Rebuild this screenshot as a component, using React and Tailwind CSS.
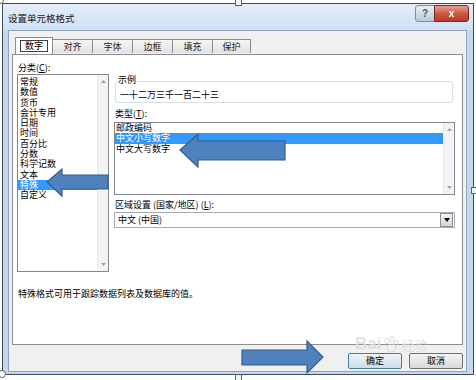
import React from 'react';

const FONT = "font-['Noto_Sans_CJK_SC','Noto_Sans',sans-serif]";

function Scrollbar() {
  return (
    <div className="w-[11px] shrink-0 bg-[#f3f3f3] border-l border-[#e8e8e8] flex flex-col justify-between items-center py-[5px]">
      <svg width="5" height="3" viewBox="0 0 5 3"><path d="M0 3 L2.5 0 L5 3 Z" fill="#a0a0a0" /></svg>
      <svg width="5" height="3" viewBox="0 0 5 3"><path d="M0 0 L2.5 3 L5 0 Z" fill="#a0a0a0" /></svg>
    </div>
  );
}

function Tab({ label, active, w }) {
  if (active) {
    return (
      <div className={`${w} h-[17px] -mb-px relative z-10 bg-white border border-b-0 border-[#898c95] flex items-center justify-center`}>
        <div className="border border-[#404040] px-[4px] leading-[10px] text-[9px]">{label}</div>
      </div>
    );
  }
  return (
    <div className={`${w} h-[14px] mt-[2px] -ml-px bg-linear-to-b from-[#f6f6f6] to-[#e2e2e2] border border-b-0 border-[#898c95] flex items-center justify-center text-[9px] leading-[10px] text-[#222]`}>
      {label}
    </div>
  );
}

export default function App() {
  const cats = ['常规', '数值', '货币', '会计专用', '日期', '时间', '百分比', '分数', '科学记数', '文本', '特殊', '自定义'];
  const types = ['邮政编码', '中文小写数字', '中文大写数字'];
  return (
    <div className={`relative w-[476px] h-[380px] bg-white overflow-hidden text-black ${FONT}`}>
      {/* dialog */}
      <div className="ml-[2px] mt-[3px] w-[472px] h-[372px] border border-[#3e4b5a] bg-[#c3d7ee] flex flex-col">
        {/* title bar */}
        <div className="h-[26px] shrink-0 bg-linear-to-b from-[#e4edf8] to-[#cfe0f3] flex items-start justify-between pl-[5px] pr-[4px]">
          <div className="text-[9.5px] leading-[12px] mt-[8px] text-[#1a1a1a]">设置单元格格式</div>
          <div className="flex mt-[1px]">
            <div className="w-[20px] h-[17px] rounded-l-[3px] border border-[#7a8ea5] bg-linear-to-b from-[#e8eff7] to-[#b9c9dc] flex items-center justify-center text-[10px] font-bold text-[#4a5a6e] leading-none font-['Liberation_Sans',sans-serif]">?</div>
            <div className="w-[35px] h-[17px] -ml-px rounded-r-[3px] border border-[#7b2a22] bg-linear-to-b from-[#e8a093] via-[#cf5a44] to-[#b73a26] flex items-center justify-center text-[10px] font-bold text-white leading-none font-['Liberation_Sans',sans-serif]">x</div>
          </div>
        </div>
        {/* content */}
        <div className="flex-1 ml-[5px] mr-[6px] mb-[2px] bg-[#f0f0f0] border border-[#8fa3bc] flex flex-col">
          {/* tabs */}
          <div className="flex items-start mt-[6px] ml-[6px] h-[17px]">
            <Tab label="数字" active w="w-[38px]" />
            <Tab label="对齐" w="w-[41px]" />
            <Tab label="字体" w="w-[41px]" />
            <Tab label="边框" w="w-[41px]" />
            <Tab label="填充" w="w-[41px]" />
            <Tab label="保护" w="w-[39px]" />
          </div>
          {/* panel */}
          <div className="mx-[3px] h-[291px] bg-white border border-[#898c95] flex flex-col text-[9px] leading-[12px]">
            <div className="flex mt-[7px] ml-[4px]">
              {/* left column */}
              <div className="w-[92px] flex flex-col">
                <div className="h-[12px] pl-[1px]">分类(<u>C</u>):</div>
                <div className="h-[198px] border border-[#828790] bg-white flex">
                  <div className="flex-1 pt-[2px]">
                    {cats.map((c) => (
                      <div
                        key={c}
                        className={`h-[10.3px] leading-[10.3px] pl-[2px] ${c === '特殊' ? 'bg-[#3399ff] text-white' : ''}`}
                      >
                        {c}
                      </div>
                    ))}
                  </div>
                  <Scrollbar />
                </div>
              </div>
              {/* right column */}
              <div className="w-[341px] ml-[5px] flex flex-col">
                <div className="mt-[12px] ml-[3px] px-[1px] w-fit h-[12px] -mb-[5px] bg-white relative z-10">示例</div>
                <div className="h-[22px] ml-[1px] mr-[2px] border border-[#d5dfe5] rounded-[3px] pl-[4px] pt-[7px]">一十二万三千一百二十三</div>
                <div className="mt-[5px] h-[12px] pl-[1px]">类型(<u>T</u>):</div>
                <div className="mt-[2px] h-[73px] border border-[#828790] bg-white flex overflow-hidden">
                  <div className="flex-1">
                    {types.map((t, i) => (
                      <div
                        key={t}
                        className={`h-[10.3px] leading-[10.3px] pl-[1px] ${i === 1 ? 'bg-[#3399ff] text-white' : ''}`}
                      >
                        {t}
                      </div>
                    ))}
                  </div>
                  <Scrollbar />
                </div>
                <div className="mt-[4px] h-[12px] pl-[1px]">区域设置 (国家/地区) (<u>L</u>):</div>
                <div className="mt-[1px] h-[16px] border border-[#a5acb5] bg-white flex items-center">
                  <div className="flex-1 pl-[3px]">中文 (中国)</div>
                  <div className="w-[13px] h-[14px] mr-[1px] border border-[#8d8d8d] bg-linear-to-b from-[#f3f3f3] to-[#d6d6d6] flex items-center justify-center">
                    <svg width="6" height="4" viewBox="0 0 6 4"><path d="M0 0 L6 0 L3 4 Z" fill="#000" /></svg>
                  </div>
                </div>
              </div>
            </div>
            <div className="mt-[16px] ml-[5px]">特殊格式可用于跟踪数据列表及数据库的值。</div>
          </div>
          {/* buttons */}
          <div className="flex justify-end gap-[7px] mt-[8px] mr-[3px] text-[9px]">
            <div className="w-[54px] h-[16px] rounded-[2px] border border-[#3c7fb1] bg-linear-to-b from-[#edf5fb] to-[#cfdce8] flex items-center justify-center">确定</div>
            <div className="w-[54px] h-[16px] rounded-[2px] border border-[#707070] bg-linear-to-b from-[#f4f4f4] to-[#d9d9d9] flex items-center justify-center">取消</div>
          </div>
        </div>
      </div>

      {/* watermark */}
      <div className="absolute left-[355px] top-[334px] flex items-end gap-[2px] text-[#dcdcdc] opacity-80 pointer-events-none">
        <span className="text-[17px] font-bold leading-[20px] font-['Liberation_Sans',sans-serif]">Bai</span>
        <svg width="16" height="18" viewBox="0 0 16 18">
          <g fill="none" stroke="#d0d0d0" strokeWidth="1">
            <ellipse cx="4" cy="5" rx="2" ry="2.5" />
            <ellipse cx="9" cy="3" rx="2" ry="2.5" />
            <ellipse cx="13" cy="7" rx="2" ry="2.5" />
            <ellipse cx="8.5" cy="12" rx="4.5" ry="4" />
          </g>
        </svg>
        <span className="text-[13px] leading-[18px]">经验</span>
      </div>

      {/* arrows */}
      <svg className="absolute left-0 top-0 pointer-events-none" width="476" height="380" viewBox="0 0 476 380">
        <g fill="#4f81bd" stroke="#385d8a" strokeWidth="1.2" strokeLinejoin="miter">
          <polygon points="47,182 62,169 62,175 108,175 108,189 62,189 62,196" />
          <polygon points="180,150 198,134 198,141 285,141 285,160 198,160 198,167" />
          <polygon points="242,350 307,350 307,341 323,357 307,373 307,365 242,365" />
        </g>
      </svg>

      {/* selection handles */}
      <div className="absolute left-[-4px] top-[-4px] w-[8px] h-[8px] rounded-full bg-white border border-[#606060]" />
      <div className="absolute left-[235px] top-[-1px] w-[7px] h-[7px] bg-[#eef4fa] border border-[#606060]" />
      <div className="absolute left-[471px] top-[187px] w-[7px] h-[7px] bg-[#eef4fa] border border-[#606060]" />
      <div className="absolute left-[-2px] top-[370px] w-[8px] h-[8px] rounded-full bg-white border border-[#606060]" />
      <div className="absolute left-[235px] top-[374px] w-[7px] h-[7px] bg-[#eef4fa] border border-[#606060]" />
    </div>
  );
}
